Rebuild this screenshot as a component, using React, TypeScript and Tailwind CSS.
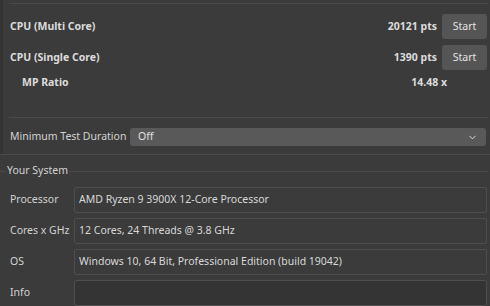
import { ChevronDown } from 'lucide-react'

const font = { fontFamily: '"Noto Sans", "Open Sans", Arial, sans-serif' }

function ScoreRow({ label, score }: { label: string; score: string }) {
  return (
    <div className="flex items-center h-[25px] pl-[1px]">
      <span className="font-bold text-[10.5px] text-[#dcdcdc] flex-1">{label}</span>
      <span className="font-bold text-[10.5px] text-[#dcdcdc] mr-[5px]">{score}</span>
      <button className="w-[45px] h-[25px] rounded-[3px] bg-[#555555] text-[10.5px] text-[#e4e4e4]">
        Start
      </button>
    </div>
  )
}

function InfoRow({ label, value, dark }: { label: string; value?: string; dark?: boolean }) {
  return (
    <div className="flex items-center h-[26px]">
      <span className="w-[64px] pl-[10px] text-[10.5px] text-[#d2d2d2] box-content whitespace-nowrap">{label}</span>
      <div
        className={
          'flex-1 h-[26px] flex items-center px-[4px] border border-[#4e4e4e] rounded-[2px] text-[10.5px] text-[#d8d8d8] whitespace-nowrap ' +
          (dark ? 'bg-[#343434]' : 'bg-[#3b3b3b]')
        }
      >
        {value}
      </div>
    </div>
  )
}

export default function App() {
  return (
    <div className="w-[490px] h-[306px] overflow-hidden bg-[#3b3b3b]" style={font}>
      <div className="border-l-[3px] border-[#333333] pl-[6px] pr-[2px] pt-[3px]">
        <div className="border-t border-[#4a4a4a] pt-[10px] pr-[1px] flex flex-col gap-[6px]">
          <ScoreRow label="CPU (Multi Core)" score="20121 pts" />
          <ScoreRow label="CPU (Single Core)" score="1390 pts" />
          <div className="flex items-center h-[16px] pl-[13px] mt-[-1px]">
            <span className="font-bold text-[10.5px] text-[#dcdcdc] flex-1">MP Ratio</span>
            <span className="font-bold text-[10.5px] text-[#dcdcdc] mr-[40px]">14.48 x</span>
          </div>
        </div>
        <div className="border-t border-[#4a4a4a] mt-[26px] pt-[10px] pb-[8px] flex items-center">
          <span className="w-[121px] pl-[1px] text-[10.5px] text-[#d2d2d2] whitespace-nowrap">Minimum Test Duration</span>
          <div className="flex-1 mr-[2px] h-[18px] rounded-[3px] bg-[#595959] flex items-center px-[8px] text-[10.5px] text-[#e0e0e0]">
            <span className="flex-1">Off</span>
            <ChevronDown size={11} strokeWidth={2} className="text-[#e8e8e8]" />
          </div>
        </div>
      </div>
      <div className="border-t border-[#4a4a4a]">
        <div className="flex items-center h-[32px] pr-[2px]">
          <div className="w-[6px] border-t border-[#4a4a4a]" />
          <span className="px-[1px] text-[10.5px] text-[#d2d2d2]">Your System</span>
          <div className="flex-1 border-t border-[#4a4a4a]" />
        </div>
        <div className="flex flex-col gap-[5px] pr-[3px]">
          <InfoRow label="Processor" value="AMD Ryzen 9 3900X 12-Core Processor" />
          <InfoRow label="Cores x GHz" value="12 Cores, 24 Threads @ 3.8 GHz" />
          <InfoRow label="OS" value="Windows 10, 64 Bit, Professional Edition (build 19042)" />
          <InfoRow label="Info" dark />
        </div>
      </div>
    </div>
  )
}
